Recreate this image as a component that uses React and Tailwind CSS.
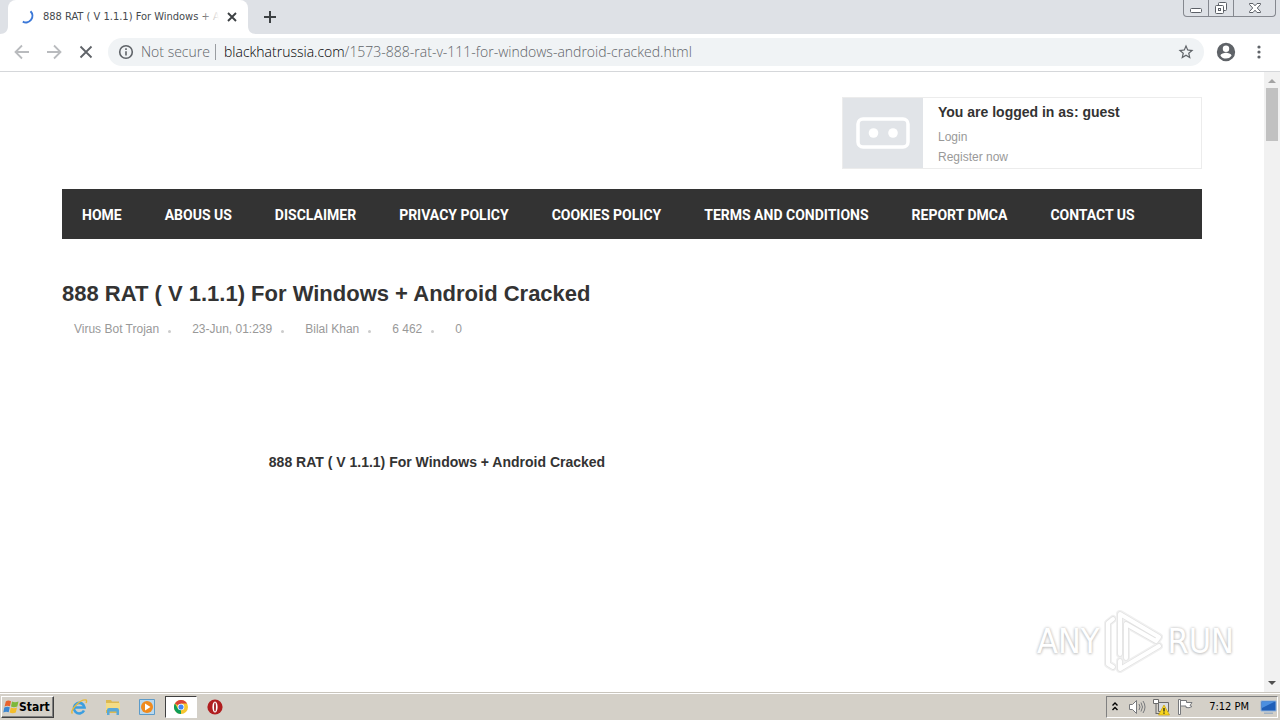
import React from "react";

const navItems = [
  "HOME",
  "ABOUS US",
  "DISCLAIMER",
  "PRIVACY POLICY",
  "COOKIES POLICY",
  "TERMS AND CONDITIONS",
  "REPORT DMCA",
  "CONTACT US",
];

const meta = ["Virus Bot Trojan", "23-Jun, 01:239", "Bilal Khan", "6 462", "0"];

function TabStrip() {
  return (
    <div className="flex h-[34px] shrink-0 items-start justify-between bg-[#dee1e6]">
      <div className="flex h-full items-end">
        <svg className="h-2 w-2" viewBox="0 0 8 8" aria-hidden="true">
          <path d="M8 0v8H0c5 0 8-3 8-8z" fill="#fff" />
        </svg>
        <div className="flex h-full w-[240px] items-center rounded-t-lg bg-white pl-3 pr-2">
          <svg className="h-4 w-4 shrink-0" viewBox="0 0 16 16" fill="none" aria-hidden="true">
            <path d="M10.500 2.300A6.500 6.500 0 0 1 2.800 12.600" stroke="#3b78d8" strokeWidth="2" />
          </svg>
          <span className="relative ml-[7px] w-[176px] overflow-hidden whitespace-nowrap font-['DejaVu_Sans_Condensed','DejaVu_Sans',sans-serif] text-[11px] text-[#45494d]">
            888 RAT ( V 1.1.1) For Windows + A
            <span className="absolute inset-y-0 right-0 w-5 bg-gradient-to-r from-transparent to-white" />
          </span>
          <button aria-label="Close tab" className="ml-auto flex h-4 w-4 items-center justify-center">
            <svg className="h-4 w-4" viewBox="0 0 16 16" stroke="#3c4043" strokeWidth="1.9" aria-hidden="true">
              <path d="M4 4l8 8M12 4l-8 8" />
            </svg>
          </button>
        </div>
        <svg className="h-2 w-2" viewBox="0 0 8 8" aria-hidden="true">
          <path d="M0 0v8h8C3 8 0 5 0 0z" fill="#fff" />
        </svg>
        <button aria-label="New tab" className="flex h-full w-7 items-center justify-center">
          <svg className="h-4 w-4" viewBox="0 0 16 16" stroke="#3c4043" strokeWidth="2" aria-hidden="true">
            <path d="M8 2v12M2 8h12" />
          </svg>
        </button>
      </div>
      <div className="mr-1 flex h-[17px] rounded-b-[4px] border border-t-0 border-[#85888f] bg-[#dee1e6]">
        <button aria-label="Minimize" className="flex w-[25px] items-center justify-center border-r border-[#85888f]">
          <svg className="h-4 w-4" viewBox="0 0 16 16" fill="#fff" stroke="#5c6067" aria-hidden="true">
            <rect x="2.500" y="8.500" width="11" height="4" rx="1" />
          </svg>
        </button>
        <button aria-label="Restore" className="flex w-[25px] items-center justify-center border-r border-[#85888f]">
          <svg className="h-4 w-4" viewBox="0 0 16 16" fill="#fff" stroke="#5c6067" aria-hidden="true">
            <rect x="5.500" y="2.500" width="8" height="8" rx="1" />
            <rect x="2.500" y="5.500" width="8" height="8" rx="1" />
            <rect x="5.500" y="8.500" width="2" height="2" />
          </svg>
        </button>
        <button aria-label="Close" className="flex w-[41px] items-center justify-center">
          <svg className="h-4 w-4" viewBox="0 0 16 16" fill="#fff" stroke="#5c6067" aria-hidden="true">
            <path d="M2.500 3.500h3.500l2 2.300 2-2.300h3.500v1l-3.200 3.500 3.200 3.500v1H10l-2-2.300-2 2.300H2.500v-1L5.700 8 2.500 4.500z" />
          </svg>
        </button>
      </div>
    </div>
  );
}

function Toolbar() {
  return (
    <div className="flex h-[38px] shrink-0 items-center border-b border-[#d5d7da] bg-white pb-px pl-3 pr-[11px]">
      <div className="flex gap-3">
        <button aria-label="Back">
          <svg className="h-5 w-5" viewBox="0 0 20 20" fill="none" stroke="#b9bbbe" strokeWidth="1.8" aria-hidden="true">
            <path d="M17 10H4M10 3.500L3.500 10l6.500 6.500" />
          </svg>
        </button>
        <button aria-label="Forward">
          <svg className="h-5 w-5" viewBox="0 0 20 20" fill="none" stroke="#b9bbbe" strokeWidth="1.8" aria-hidden="true">
            <path d="M3 10h13M10 3.500l6.500 6.500-6.500 6.500" />
          </svg>
        </button>
        <button aria-label="Stop loading">
          <svg className="h-5 w-5" viewBox="0 0 20 20" fill="none" stroke="#5f6368" strokeWidth="1.800" aria-hidden="true">
            <path d="M4.500 4.500l11 11M15.500 4.500l-11 11" />
          </svg>
        </button>
      </div>
      <div className="ml-3 flex h-7 flex-1 items-center rounded-full bg-[#f0f3f5] px-2 font-['Open_Sans',sans-serif] text-sm text-[#5f6368]">
        <svg className="mx-[2px] h-4 w-4" viewBox="0 0 16 16" fill="none" stroke="#5f6368" strokeWidth="1.600" aria-hidden="true">
          <circle cx="8" cy="8" r="6.300" />
          <path d="M8 7.200v4.300M8 4.200v1.700" />
        </svg>
        <span className="ml-[5px] w-[67px] whitespace-nowrap font-light">Not secure</span>
        <span className="ml-[7px] mr-2 h-4 w-px bg-[#9a9da1]" />
        <span className="flex-1 whitespace-nowrap font-light">
          <span className="text-black">blackhatrussia.com</span>/1573-888-rat-v-111-for-windows-android-cracked.html
        </span>
        <button aria-label="Bookmark this page">
          <svg className="h-5 w-5 p-px" viewBox="0 0 24 24" fill="#5f6368" aria-hidden="true">
            <path d="M22 9.240l-7.190-.62L12 2 9.190 8.630 2 9.240l5.460 4.730L5.820 21 12 17.270 18.180 21l-1.630-7.030L22 9.240zM12 15.400l-3.760 2.270 1-4.280-3.320-2.880 4.380-.38L12 6.100l1.710 4.040 4.380.38-3.320 2.880 1 4.280L12 15.400z" />
          </svg>
        </button>
      </div>
      <button aria-label="Profile" className="ml-[11px]">
        <svg className="h-[22px] w-[22px]" viewBox="0 0 24 24" fill="#5f6368" aria-hidden="true">
          <path d="M12 2a10 10 0 1 0 0 20 10 10 0 0 0 0-20zm0 3a3.500 3.500 0 1 1 0 7 3.500 3.500 0 0 1 0-7zm0 14.200a7.200 7.200 0 0 1-6-3.220c.03-1.990 4-3.080 6-3.080s5.970 1.090 6 3.080a7.200 7.200 0 0 1-6 3.220z" />
        </svg>
      </button>
      <button aria-label="Menu" className="ml-3">
        <svg className="h-5 w-5" viewBox="0 0 20 20" fill="#5f6368" aria-hidden="true">
          <circle cx="10" cy="5" r="1.600" />
          <circle cx="10" cy="10" r="1.600" />
          <circle cx="10" cy="15" r="1.600" />
        </svg>
      </button>
    </div>
  );
}

function UserPanel() {
  return (
    <section className="ml-auto flex h-[72px] w-[360px] border border-[#ececec]">
      <div className="flex w-20 items-center justify-center bg-[#e1e4e8]">
        <svg className="h-9 w-14" viewBox="0 0 56 36" fill="none" aria-hidden="true">
          <rect x="3" y="4" width="50" height="28" rx="5" stroke="#fff" strokeWidth="3.500" />
          <circle cx="18.500" cy="18" r="4.800" fill="#fff" />
          <circle cx="38" cy="18" r="4.800" fill="#fff" />
        </svg>
      </div>
      <div className="flex flex-col pl-[15px] text-xs leading-5 text-[#999]">
        <h2 className="pb-1 pt-[3px] text-sm font-bold leading-[22px] text-[#333]">
          You are logged in as: guest
        </h2>
        <a href="#login">Login</a>
        <a href="#register">Register now</a>
      </div>
    </section>
  );
}

function Watermark() {
  const mark = "M10 11L5 15v41l5 3M17 46V6l39 23-3 4-30-17v34M17 53v8l39-23";
  return (
    <div className="absolute bottom-[18px] right-[46px] flex items-center gap-1 font-['DejaVu_Sans_Condensed','DejaVu_Sans',sans-serif] text-[34px] leading-none text-white [text-shadow:0_0_3px_#bbb,0_1px_3px_#ccc]">
      <span>ANY</span>
      <svg className="h-[66px] w-[60px]" viewBox="0 0 60 66" fill="none" strokeLinejoin="round" strokeLinecap="round" aria-hidden="true">
        <path d={mark} stroke="#f0f0f0" strokeWidth="8" />
        <path d={mark} stroke="#e2e2e2" strokeWidth="5.500" />
        <path d={mark} stroke="#fff" strokeWidth="4" />
      </svg>
      <span>RUN</span>
    </div>
  );
}

function Page() {
  return (
    <div className="relative flex min-h-0 flex-1 bg-white font-['Liberation_Sans',Arial,sans-serif]">
      <main className="min-w-0 flex-1 overflow-hidden">
        <div className="mx-auto max-w-[1140px] pt-[25px]">
          <UserPanel />
          <nav className="mt-5 flex h-[50px] items-center gap-[43px] whitespace-nowrap bg-[#333] px-5 pt-px font-['Roboto',sans-serif] text-sm font-bold text-white">
            {navItems.map((item) => (
              <a key={item} href="#nav">
                {item}
              </a>
            ))}
          </nav>
          <article className="pt-10">
            <h1 className="text-[22px] font-bold leading-[30px] text-[#333]">
              888 RAT ( V 1.1.1) For Windows + Android Cracked
            </h1>
            <ul className="flex pl-3 pt-[10px] text-xs leading-5 text-[#999]">
              {meta.map((item, i) => (
                <li key={item} className="flex items-center">
                  {item}
                  {i < meta.length - 1 && <span className="ml-[9px] mr-[21px] mt-1 h-[3px] w-[3px] rounded-full bg-[#ccc]" />}
                </li>
              ))}
            </ul>
            <p className="w-[750px] pt-[113px] text-center text-sm font-bold leading-5 text-[#333]">
              888 RAT ( V 1.1.1) For Windows + Android Cracked
            </p>
          </article>
        </div>
      </main>
      <div className="flex w-4 shrink-0 flex-col items-center bg-[#f1f1f1]">
        <svg className="h-4 w-4" viewBox="0 0 16 16" fill="#a3a3a3" aria-hidden="true">
          <path d="M4 11l4-4 4 4z" />
        </svg>
        <div className="h-[53px] w-3 bg-[#c1c1c1]" />
        <svg className="mt-auto h-[17px] w-4" viewBox="0 0 16 17" fill="#505050" aria-hidden="true">
          <path d="M4 6l4 4 4-4z" />
        </svg>
      </div>
      <Watermark />
    </div>
  );
}

function Flag() {
  return (
    <svg className="h-4 w-4 shrink-0" viewBox="0 0 16 16" aria-hidden="true">
      <path d="M2.800 2.500Q5 .8 8 2.300L7 7.300Q4 6 1.600 7.500z" fill="#e8622c" />
      <path d="M9 2.600q3 1.400 6.500-.1l-1.200 5Q11 9 8 7.600z" fill="#7db83a" />
      <path d="M1.300 8.500q3-1.500 5.500-.2L5.700 13.300Q3 12 .3 13.500z" fill="#3b86d1" />
      <path d="M7.800 8.600q3 1.400 6.200 0l-1.200 5Q9.500 15 6.700 13.600z" fill="#f3bd2c" />
    </svg>
  );
}

function Taskbar() {
  return (
    <footer className="flex h-7 shrink-0 items-center border-t border-[#c9c5bd] bg-[#d4d0c8] pl-px pt-px text-[11px] text-black shadow-[inset_0_1px_0_#fff] font-['DejaVu_Sans_Condensed','DejaVu_Sans',sans-serif]">
      <button className="flex h-[22px] w-[53px] items-center border border-b-[#404040] border-l-white border-r-[#404040] border-t-white pl-px text-xs font-bold shadow-[inset_-1px_-1px_0_#808080]">
        <Flag />
        Start
      </button>
      <div className="ml-2 flex items-center">
        <button aria-label="Internet Explorer" className="flex h-[22px] w-[34px] items-center justify-center">
          <svg className="h-[18px] w-[18px]" viewBox="0 0 18 18" fill="none" aria-hidden="true">
            <path d="M14 12.500A5.300 5.300 0 1 1 14.500 9.500H4.500" stroke="#3b9ee0" strokeWidth="2.600" />
            <path d="M2.500 15.500C-1 13 10 1 16 2c1 .5.500 2 0 3" stroke="#e6b93c" strokeWidth="1.400" />
          </svg>
        </button>
        <button aria-label="File Explorer" className="flex h-[22px] w-[34px] items-center justify-center">
          <svg className="h-[18px] w-[18px]" viewBox="0 0 18 18" aria-hidden="true">
            <path d="M2 2h5l1 1.500h7V15H2z" fill="#dcb951" />
            <path d="M2 5h14v7H2z" fill="#f3dc85" />
            <path d="M3 17v-5q0-2 2-2h8q2 0 2 2v5h-2.500v-3.500h-7V17z" fill="#58a8d8" />
          </svg>
        </button>
        <button aria-label="Media Player" className="flex h-[22px] w-[34px] items-center justify-center">
          <svg className="h-[18px] w-[18px]" viewBox="0 0 18 18" aria-hidden="true">
            <path d="M1.500 1.500h15v15h-15z" fill="#b9d8ee" stroke="#5c9bc9" />
            <circle cx="9" cy="9" r="6" fill="#f08a1d" />
            <path d="M7 5.500l5.500 3.500L7 12.500z" fill="#fff" />
          </svg>
        </button>
        <button aria-label="Google Chrome" className="ml-px flex h-[22px] w-8 items-center justify-center border border-b-white border-l-[#404040] border-r-white border-t-[#404040] bg-white">
          <svg className="h-[14px] w-[14px]" viewBox="0 0 16 16" aria-hidden="true">
            <circle cx="8" cy="8" r="8" fill="#f6c62f" />
            <path d="M8 8L1.070 4A8 8 0 0 1 14.930 4H8z" fill="#db4437" />
            <path d="M8 8L8 16A8 8 0 0 1 1.070 4L4.500 10z" fill="#0f9d58" />
            <circle cx="8" cy="8" r="3.800" fill="#fff" />
            <circle cx="8" cy="8" r="2.900" fill="#4285f4" />
          </svg>
        </button>
        <button aria-label="Opera" className="flex h-[22px] w-9 items-center justify-center">
          <svg className="h-4 w-4" viewBox="0 0 16 16" aria-hidden="true">
            <circle cx="8" cy="8" r="7.600" fill="#b01d1f" />
            <ellipse cx="8" cy="8" rx="2.600" ry="5.600" fill="#fff" />
            <ellipse cx="8" cy="8" rx=".9" ry="4.600" fill="#9c1518" />
          </svg>
        </button>
      </div>
      <div className="ml-auto mr-[2px] flex h-[22px] items-center border border-b-white border-l-[#808080] border-r-white border-t-[#808080] pl-1">
        <button aria-label="Show hidden icons">
          <svg className="h-3 w-2" viewBox="0 0 8 12" fill="none" stroke="#000" strokeWidth="1.400" aria-hidden="true">
            <path d="M1.500 4.500L4 2l2.500 2.500M1.500 9L4 6.500 6.500 9" />
          </svg>
        </button>
        <button aria-label="Volume" className="ml-[9px]">
          <svg className="h-[18px] w-[18px]" viewBox="0 0 18 18" fill="none" stroke="#77797c" aria-hidden="true">
            <path d="M1.500 6.500h3l4-4v13l-4-4h-3z" fill="#fff" />
            <path d="M11 6q2 3 0 6M13 4.500q3 4.500 0 9M15 3q4 6 0 12" />
          </svg>
        </button>
        <button aria-label="Network" className="ml-[6px]">
          <svg className="h-[18px] w-[18px]" viewBox="0 0 18 18" fill="none" aria-hidden="true">
            <path d="M6.500 4.500h10v9h-10z" fill="#d9dcdf" stroke="#6a6a6a" />
            <path d="M1.500 1.500h5v4h-5zM4 5.500V16M4 15.500h4" fill="#fff" stroke="#6a6a6a" />
            <path d="M12 7l5.500 10h-11z" fill="#f8d61c" stroke="#c79f0d" strokeWidth=".7" />
            <path d="M12 10v3.500M12 14.600v1.200" stroke="#222" strokeWidth="1.300" />
          </svg>
        </button>
        <button aria-label="Action Center" className="ml-[6px]">
          <svg className="h-[18px] w-[18px]" viewBox="0 0 18 18" fill="#fff" stroke="#77797c" aria-hidden="true">
            <path d="M2.500 1.500h2v15h-2zM4.500 2.500h6v2h5.500l-2 3 2 1q-3 2-6 1v-1.500h-5.500z" />
          </svg>
        </button>
        <time className="ml-[15px] whitespace-nowrap">7:12 PM</time>
        <button aria-label="Show desktop" className="ml-[10px]">
          <svg className="h-[18px] w-[18px]" viewBox="0 0 18 18" aria-hidden="true">
            <path d="M2 3h15v10H2z" fill="#1f5fb8" stroke="#8fb3dd" />
            <path d="M3 3.500h13L3 10z" fill="#4b8fe0" />
            <path d="M5 14.500h9v1.500H5z" fill="#9fb0c2" />
          </svg>
        </button>
      </div>
    </footer>
  );
}

export default function App() {
  return (
    <div className="flex h-screen flex-col overflow-hidden bg-white">
      <TabStrip />
      <Toolbar />
      <Page />
      <Taskbar />
    </div>
  );
}
